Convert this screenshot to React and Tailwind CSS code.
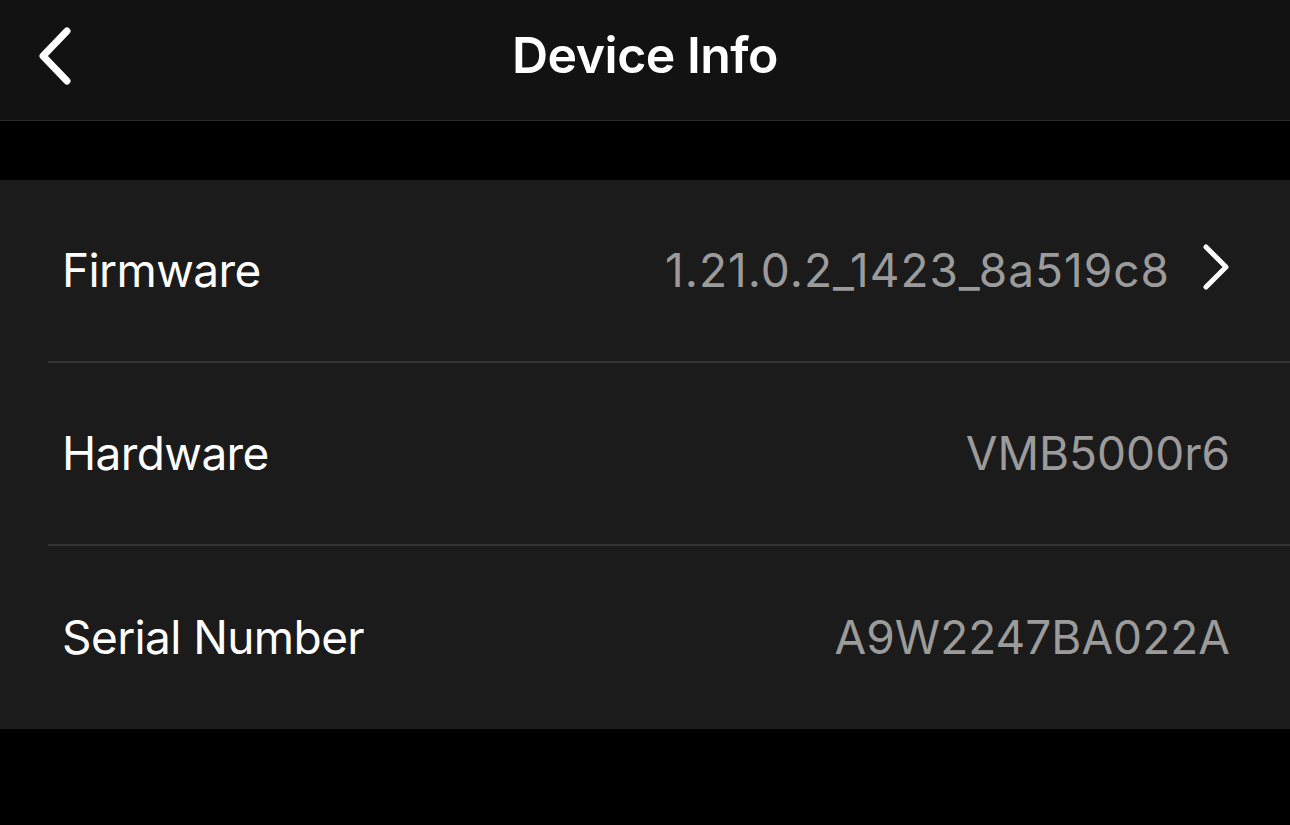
import React from "react";

const rows = [
  { label: "Firmware", value: "1.21.0.2_1423_8a519c8", link: true },
  { label: "Hardware", value: "VMB5000r6" },
  { label: "Serial Number", value: "A9W2247BA022A" },
];

function BackIcon() {
  return (
    <svg width="40" height="64" viewBox="0 0 40 64" fill="none">
      <path
        d="M31 6 L7 31 L31 56"
        stroke="#fff"
        strokeWidth="7"
        strokeLinecap="round"
        strokeLinejoin="round"
      />
    </svg>
  );
}

function ChevronRight() {
  return (
    <svg width="32" height="48" viewBox="0 0 32 48" fill="none">
      <path
        d="M6 4 L26 24 L6 44"
        stroke="#fff"
        strokeWidth="5"
        strokeLinecap="round"
        strokeLinejoin="round"
      />
    </svg>
  );
}

export default function App() {
  return (
    <div
      className="min-h-screen bg-black text-white"
      style={{ fontFamily: "Inter, 'Noto Sans', sans-serif" }}
    >
      {/* Header */}
      <div className="grid h-[121px] grid-cols-[1fr_auto_1fr] items-center border-b border-[#2b2b2b] bg-[#121212] px-[36px]">
        <button className="flex items-center justify-start pb-[6px]">
          <BackIcon />
        </button>
        <h1 className="pb-[10px] text-[50px] font-semibold tracking-[-0.5px]">
          Device Info
        </h1>
        <div />
      </div>

      <div className="h-[59px]" />

      {/* Info list */}
      <div className="bg-[#1b1b1b]">
        {rows.map((r, i) => (
          <div key={r.label} className="pl-[48px]">
            <div
              className={
                "flex h-[183px] items-center justify-between pr-[60px] " +
                (i < rows.length - 1 ? "border-b-2 border-[#333333]" : "")
              }
            >
              <span className="pl-[14px] text-[46px] tracking-[-0.6px] text-white">
                {r.label}
              </span>
              <div className="flex items-center gap-[30px]">
                <span
                  className={
                    "text-[46px] text-[#9b9b9b] " +
                    (r.link ? "tracking-[1px]" : "")
                  }
                >
                  {r.value}
                </span>
                {r.link && (
                  <span className="-mr-[2px] -mt-[8px]">
                    <ChevronRight />
                  </span>
                )}
              </div>
            </div>
          </div>
        ))}
      </div>
    </div>
  );
}
